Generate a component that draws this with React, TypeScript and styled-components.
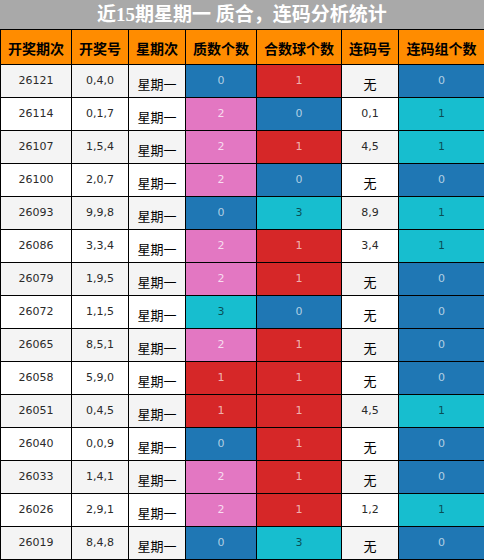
import React from 'react'
import styled, { createGlobalStyle } from 'styled-components';

const GlobalStyle = createGlobalStyle`
  html, body {
    margin: 0;
    padding: 0;
    background: #ffffff;
  }
  body {
    font-family: "DejaVu Sans", "Noto Sans CJK SC", sans-serif;
  }
`

type Tone = 'blue' | 'red' | 'pink' | 'cyan';

const TONES: Record<Tone, { bg: string, fg: string }> = {
  blue: { bg: '#1f77b4', fg: 'rgba(255,255,255,.65)' },
  red: { bg: '#d62728', fg: 'rgba(255,255,255,.65)' },
  pink: { bg: '#e377c2', fg: 'rgba(255,255,255,.75)' },
  cyan: { bg: '#17becf', fg: 'rgba(0,0,0,.6)' },
}

// 0..3 scale for prime / composite counts
const countTone = (n: number): Tone => (['blue', 'red', 'pink', 'cyan'] as Tone[])[n];
const groupTone = (n: number): Tone => n ? 'cyan' : 'blue';

interface RowData {
  issue: string,
  nums: string,
  primes: number,
  composites: number,
  lianma: string,
  groups: number,
}

const rows: RowData[] = [
  { issue: '26121', nums: '0,4,0', primes: 0, composites: 1, lianma: '无', groups: 0 },
  { issue: '26114', nums: '0,1,7', primes: 2, composites: 0, lianma: '0,1', groups: 1 },
  { issue: '26107', nums: '1,5,4', primes: 2, composites: 1, lianma: '4,5', groups: 1 },
  { issue: '26100', nums: '2,0,7', primes: 2, composites: 0, lianma: '无', groups: 0 },
  { issue: '26093', nums: '9,9,8', primes: 0, composites: 3, lianma: '8,9', groups: 1 },
  { issue: '26086', nums: '3,3,4', primes: 2, composites: 1, lianma: '3,4', groups: 1 },
  { issue: '26079', nums: '1,9,5', primes: 2, composites: 1, lianma: '无', groups: 0 },
  { issue: '26072', nums: '1,1,5', primes: 3, composites: 0, lianma: '无', groups: 0 },
  { issue: '26065', nums: '8,5,1', primes: 2, composites: 1, lianma: '无', groups: 0 },
  { issue: '26058', nums: '5,9,0', primes: 1, composites: 1, lianma: '无', groups: 0 },
  { issue: '26051', nums: '0,4,5', primes: 1, composites: 1, lianma: '4,5', groups: 1 },
  { issue: '26040', nums: '0,0,9', primes: 0, composites: 1, lianma: '无', groups: 0 },
  { issue: '26033', nums: '1,4,1', primes: 2, composites: 1, lianma: '无', groups: 0 },
  { issue: '26026', nums: '2,9,1', primes: 2, composites: 1, lianma: '1,2', groups: 1 },
  { issue: '26019', nums: '8,4,8', primes: 0, composites: 3, lianma: '无', groups: 0 },
]

const columns = [
  { label: '开奖期次', width: 71 },
  { label: '开奖号', width: 57 },
  { label: '星期次', width: 57 },
  { label: '质数个数', width: 71 },
  { label: '合数球个数', width: 85 },
  { label: '连码号', width: 57 },
  { label: '连码组个数', width: 86 },
]

const Wrapper = styled.div`
  width: 484px;
`

const Title = styled.div`
  height: 29px;
  background-color: #a9a9a9;
  color: #ffffff;
  font-family: "Liberation Serif", "Noto Sans CJK SC", serif;
  font-weight: bold;
  font-size: 19px;
  display: flex;
  align-items: center;
  justify-content: center;
  line-height: 1;
`

const Table = styled.table`
  width: 484px;
  border-collapse: collapse;
  table-layout: fixed;

  th, td {
    border: 1px solid #000;
    padding: 0;
    text-align: center;
    line-height: 14px;
  }
`

const HeadCell = styled.th`
  height: 33px;
  background-color: #ff8c00;
  color: #000;
  font-family: "Noto Sans CJK SC", sans-serif;
  font-weight: bold;
  font-size: 14px;
  padding-top: 1px !important;
`

const Row = styled.tr<{ $odd: boolean }>`
  background-color: ${p => p.$odd ? '#f4f4f4' : '#ffffff'};
`

const Cell = styled.td`
  height: 32px;
  font-size: 11px;
  color: #2a2a2a;
`

// CJK glyphs sit a little lower than the digits in the source chart
const cjkText = `
  font-family: "Noto Sans CJK SC", sans-serif;
  font-size: 13px;
  color: #000;
  height: 27px;
  padding-top: 5px !important;
`

const WeekCell = styled(Cell)`
  ${cjkText}
`

const ColorCell = styled(Cell)<{ $tone: Tone }>`
  background-color: ${p => TONES[p.$tone].bg};
  color: ${p => TONES[p.$tone].fg};
`

const LianmaCell = styled(Cell)<{ $none: boolean }>`
  ${p => p.$none && cjkText}
`

export default function App() {
  return (
    <>
      <GlobalStyle />
      <Wrapper>
        <Title>近15期星期一 质合，连码分析统计</Title>
        <Table>
          <colgroup>
            {columns.map(c => <col key={c.label} style={{ width: c.width }} />)}
          </colgroup>
          <thead>
            <tr>
              {columns.map(c => <HeadCell key={c.label}>{c.label}</HeadCell>)}
            </tr>
          </thead>
          <tbody>
            {rows.map((r, i) => (
              <Row key={r.issue} $odd={i % 2 === 0}>
                <Cell>{r.issue}</Cell>
                <Cell>{r.nums}</Cell>
                <WeekCell>星期一</WeekCell>
                <ColorCell $tone={countTone(r.primes)}>{r.primes}</ColorCell>
                <ColorCell $tone={countTone(r.composites)}>{r.composites}</ColorCell>
                <LianmaCell $none={r.lianma === '无'}>{r.lianma}</LianmaCell>
                <ColorCell $tone={groupTone(r.groups)}>{r.groups}</ColorCell>
              </Row>
            ))}
          </tbody>
        </Table>
      </Wrapper>
    </>
  )
}
